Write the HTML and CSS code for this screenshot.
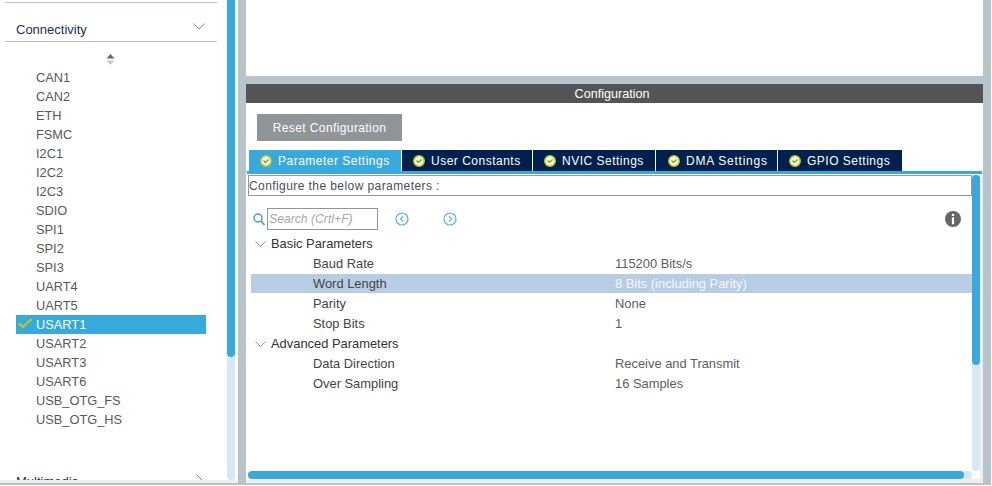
FILE: index.html
```html
<!DOCTYPE html>
<html>
<head>
<meta http-equiv="Content-Type" content="text/html; charset=utf-8"/>
<title>Configuration</title>
<link rel="stylesheet" href="styles.css">
</head>
<body>
<svg class="defs" width="0" height="0">
  <symbol id="tick" viewBox="0 0 12 12">
    <circle cx="6" cy="6" r="5.2" fill="#fff" stroke="#b9cc12" stroke-width="1.6"/>
    <path d="M3.5 5.6 L5.4 7.6 L8.6 4.4" fill="none" stroke="#8a9c14" stroke-width="1.4"/>
  </symbol>
</svg>
<div class="app">
  <div class="side">
    <div class="side-inner">
      <div class="side-main">
        <div class="side-rule"></div>
        <div class="group-head">
          <span>Connectivity</span>
          <svg class="chev" width="12" height="7" viewBox="0 0 12 7"><path d="M0.5 0.5 L6 6 L11.5 0.5" fill="none" stroke="#7f868c"/></svg>
        </div>
        <div class="sorter">
          <svg width="9" height="11" viewBox="0 0 9 11"><path d="M4.5 0 L8.5 4.5 L0.5 4.5 Z" fill="#666"/><path d="M4.5 11 L8.5 6.5 L0.5 6.5 Z" fill="#c8c8c8"/></svg>
        </div>
        <ul class="ip-list">
          <li>CAN1</li>
          <li>CAN2</li>
          <li>ETH</li>
          <li>FSMC</li>
          <li>I2C1</li>
          <li>I2C2</li>
          <li>I2C3</li>
          <li>SDIO</li>
          <li>SPI1</li>
          <li>SPI2</li>
          <li>SPI3</li>
          <li>UART4</li>
          <li>UART5</li>
          <li class="on">
            <svg class="ok" width="15" height="11" viewBox="0 0 15 11"><path d="M1 5.5 L5 9 L13.5 1" fill="none" stroke="#b5cc18" stroke-width="2.4"/></svg>
            USART1
          </li>
          <li>USART2</li>
          <li>USART3</li>
          <li>USART6</li>
          <li>USB_OTG_FS</li>
          <li>USB_OTG_HS</li>
        </ul>
        <div class="group-next">
          <span>Multimedia</span>
          <svg class="chev-next" width="8" height="8" viewBox="0 0 8 8"><path d="M0.5 0.5 L6 6" fill="none" stroke="#7f868c"/></svg>
        </div>
      </div>
      <div class="vbar side-bar"><div class="thumb"></div></div>
    </div>
  </div>

  <div class="right">
    <div class="top-pane"></div>
    <div class="config">
      <div class="config-title">Configuration</div>
      <div class="reset-row"><button class="reset">Reset Configuration</button></div>
      <div class="tabs">
        <div class="tab active t1"><svg width="12" height="12"><use href="#tick"/></svg>Parameter Settings</div>
        <div class="tab t2"><svg width="12" height="12"><use href="#tick"/></svg>User Constants</div>
        <div class="tab t3"><svg width="12" height="12"><use href="#tick"/></svg>NVIC Settings</div>
        <div class="tab t4"><svg width="12" height="12"><use href="#tick"/></svg>DMA Settings</div>
        <div class="tab t5"><svg width="12" height="12"><use href="#tick"/></svg>GPIO Settings</div>
      </div>
      <div class="tab-line"></div>
      <div class="body">
        <div class="body-row">
          <div class="pane">
            <div class="desc">Configure the below parameters :</div>
            <div class="tools">
              <svg class="lens" width="12" height="13" viewBox="0 0 12 13"><circle cx="5" cy="5" r="4" fill="none" stroke="#3c9fd8" stroke-width="1.5"/><path d="M8 8 L11.5 12" stroke="#3c9fd8" stroke-width="1.7"/></svg>
              <div class="search">Search (Crtl+F)</div>
              <svg class="nav prev" width="14" height="14" viewBox="0 0 14 14"><circle cx="7" cy="7" r="6" fill="none" stroke="#52b3e6" stroke-width="1.2"/><path d="M8.2 4.4 L5.6 7 L8.2 9.6" fill="none" stroke="#52b3e6" stroke-width="1.2"/></svg>
              <svg class="nav next" width="14" height="14" viewBox="0 0 14 14"><circle cx="7" cy="7" r="6" fill="none" stroke="#52b3e6" stroke-width="1.2"/><path d="M5.8 4.4 L8.4 7 L5.8 9.6" fill="none" stroke="#52b3e6" stroke-width="1.2"/></svg>
              <svg class="info" width="16" height="16" viewBox="0 0 16 16"><circle cx="8" cy="8" r="8" fill="#666"/><rect x="6.9" y="2.8" width="2.2" height="2.2" fill="#fff"/><rect x="6.9" y="6.4" width="2.2" height="6.8" fill="#fff"/></svg>
            </div>
            <div class="tree">
              <div class="head"><svg width="11" height="6" viewBox="0 0 11 6"><path d="M0.5 0.5 L5.5 5.5 L10.5 0.5" fill="none" stroke="#8b9196"/></svg>Basic Parameters</div>
              <div class="row"><span>Baud Rate</span><span class="val">115200 Bits/s</span></div>
              <div class="row sel"><span>Word Length</span><span class="val">8 Bits (including Parity)</span></div>
              <div class="row"><span>Parity</span><span class="val">None</span></div>
              <div class="row"><span>Stop Bits</span><span class="val">1</span></div>
              <div class="head"><svg width="11" height="6" viewBox="0 0 11 6"><path d="M0.5 0.5 L5.5 5.5 L10.5 0.5" fill="none" stroke="#8b9196"/></svg>Advanced Parameters</div>
              <div class="row"><span>Data Direction</span><span class="val">Receive and Transmit</span></div>
              <div class="row"><span>Over Sampling</span><span class="val">16 Samples</span></div>
            </div>
          </div>
          <div class="vbar main-bar"><div class="thumb"></div></div>
        </div>
        <div class="hbar"><div class="thumb"></div></div>
      </div>
    </div>
  </div>
</div>
</body>
</html>
```

FILE: styles.css
```css
html, body {
  margin: 0;
  padding: 0;
  background: #fff;
  overflow: hidden;
}

body {
  width: 992px;
  height: 486px;
  font-family: "Liberation Sans", Arial, sans-serif;
  font-size: 12.8px;
  color: #444;
}

.defs {
  display: block;
  height: 0;
}

.app {
  display: flex;
  width: 991px;
  height: 485px;
  background: #b8c4cb;
  overflow: hidden;
}

/* left column */
.side {
  width: 238px;
  height: 483px;
  background: #eeeeee;
  flex: none;
}

.side-inner {
  display: flex;
  height: 480px;
  background: #fff;
}

.side-main {
  width: 227px;
  flex: none;
  padding-top: 2px;
  box-sizing: border-box;
  overflow: hidden;
}

.side-rule {
  height: 1px;
  width: 212px;
  margin-left: 5px;
  background: #b8c4cb;
}

.group-head {
  display: flex;
  justify-content: space-between;
  align-items: center;
  box-sizing: border-box;
  width: 212px;
  height: 39px;
  margin-left: 5px;
  padding: 14px 12px 0 11px;
  border-bottom: 1px solid #b8c4cb;
  color: #1b2f63;
  font-size: 13px;
}

.chev {
  margin-top: -6px;
}

.sorter {
  height: 26px;
  padding: 12px 0 0 106px;
  box-sizing: border-box;
}

.sorter svg {
  display: block;
}

.ip-list {
  list-style: none;
  margin: 0 0 0 16px;
  padding: 0;
  width: 190px;
  height: 400px;
}

.ip-list li {
  position: relative;
  height: 19px;
  line-height: 19px;
  padding-left: 20px;
  color: #555a60;
}

.ip-list li.on {
  background: #38a9dc;
  color: #fff;
}

.ok {
  position: absolute;
  left: 2px;
  top: 3px;
}

.group-next {
  margin: 6px 0 0 16px;
  width: 188px;
  display: flex;
  justify-content: space-between;
  color: #1b2f63;
  font-size: 13px;
}

.vbar {
  width: 8px;
  background: #d8e7f5;
  border-radius: 0 0 4px 4px;
  flex: none;
}

.vbar .thumb {
  background: #38a9dc;
  border-radius: 4px;
}

.side-bar .thumb {
  height: 357px;
  border-radius: 0 0 4px 4px;
}

/* right column */
.right {
  width: 737px;
  height: 483px;
  margin-left: 8px;
  flex: none;
}

.top-pane {
  height: 76px;
  background: #fff;
}

.config {
  margin-top: 8px;
  height: 399px;
  background: #eeeeee;
}

.config-title {
  box-sizing: border-box;
  height: 19px;
  line-height: 20px;
  padding-right: 5px;
  background: #535554;
  color: #fff;
  text-align: center;
  font-size: 12.6px;
}

.reset-row {
  background: #fff;
  padding: 11px 0 9px 11px;
}

.reset {
  display: block;
  width: 145px;
  height: 27px;
  border: 0;
  padding: 0;
  background: #90959a;
  color: #fff;
  font-family: inherit;
  font-size: 12px;
  letter-spacing: 0.4px;
}

.tabs {
  display: flex;
  gap: 1px;
  height: 21px;
  padding-left: 3px;
  background: #fff;
}

.tab {
  display: flex;
  align-items: center;
  gap: 6px;
  box-sizing: border-box;
  height: 21px;
  padding-left: 11px;
  background: #00204e;
  color: #fff;
  font-size: 12px;
  letter-spacing: 0.5px;
  white-space: nowrap;
}

.tab.active {
  background: #38a9dc;
}

.t1 { width: 152px; }
.t2 { width: 130px; }
.t3 { width: 122px; }
.t4 { width: 121px; padding-left: 12px; letter-spacing: 0.75px; }
.t5 { width: 124px; }

.tab-line {
  height: 3px;
  margin: 0 1px 0 1px;
  background: #38a9dc;
}

.body {
  width: 734px;
  height: 305px;
  background: #fff;
  padding-left: 2px;
  box-sizing: border-box;
}

.body-row {
  display: flex;
  height: 297px;
  padding-top: 1px;
  box-sizing: border-box;
}

.pane {
  width: 724px;
  flex: none;
}

.main-bar {
  height: 296px;
}

.main-bar .thumb {
  height: 190px;
}

.desc {
  box-sizing: border-box;
  height: 21px;
  line-height: 21px;
  padding-left: 0;
  border: 1px solid #999;
  color: #4c4c5c;
  font-size: 12px;
  letter-spacing: 0.42px;
}

.tools {
  display: flex;
  align-items: center;
  height: 22px;
  margin-top: 12px;
  padding-left: 5px;
}

.lens {
  flex: none;
}

.search {
  box-sizing: border-box;
  width: 111px;
  height: 22px;
  line-height: 21px;
  margin-left: 2px;
  padding-left: 1px;
  border: 1px solid #8f979c;
  color: #a8a8a8;
  font-style: italic;
  font-size: 12.2px;
}

.prev {
  margin-left: 17px;
}

.next {
  margin-left: 34px;
}

.info {
  margin-left: auto;
  margin-right: 11px;
}

.tree {
  margin-top: 4px;
  padding-left: 3px;
  font-size: 12.9px;
}

.head {
  display: flex;
  align-items: center;
  gap: 5px;
  height: 20px;
  line-height: 18px;
  padding-left: 4px;
  color: #333;
}

.row {
  display: flex;
  height: 20px;
  line-height: 20px;
  padding-left: 62px;
  color: #444;
}

.row span:first-child {
  width: 302px;
  flex: none;
}

.val {
  color: #5d5d5d;
}

.row.sel {
  background: #b8cde4;
  height: 19px;
  line-height: 19px;
  margin-bottom: 1px;
}

.row.sel .val {
  color: #f4f6fa;
}

.hbar {
  width: 724px;
  height: 8px;
  background: #d8e7f5;
  border-radius: 4px;
}

.hbar .thumb {
  width: 716px;
  height: 8px;
  background: #38a9dc;
  border-radius: 4px;
}
```
